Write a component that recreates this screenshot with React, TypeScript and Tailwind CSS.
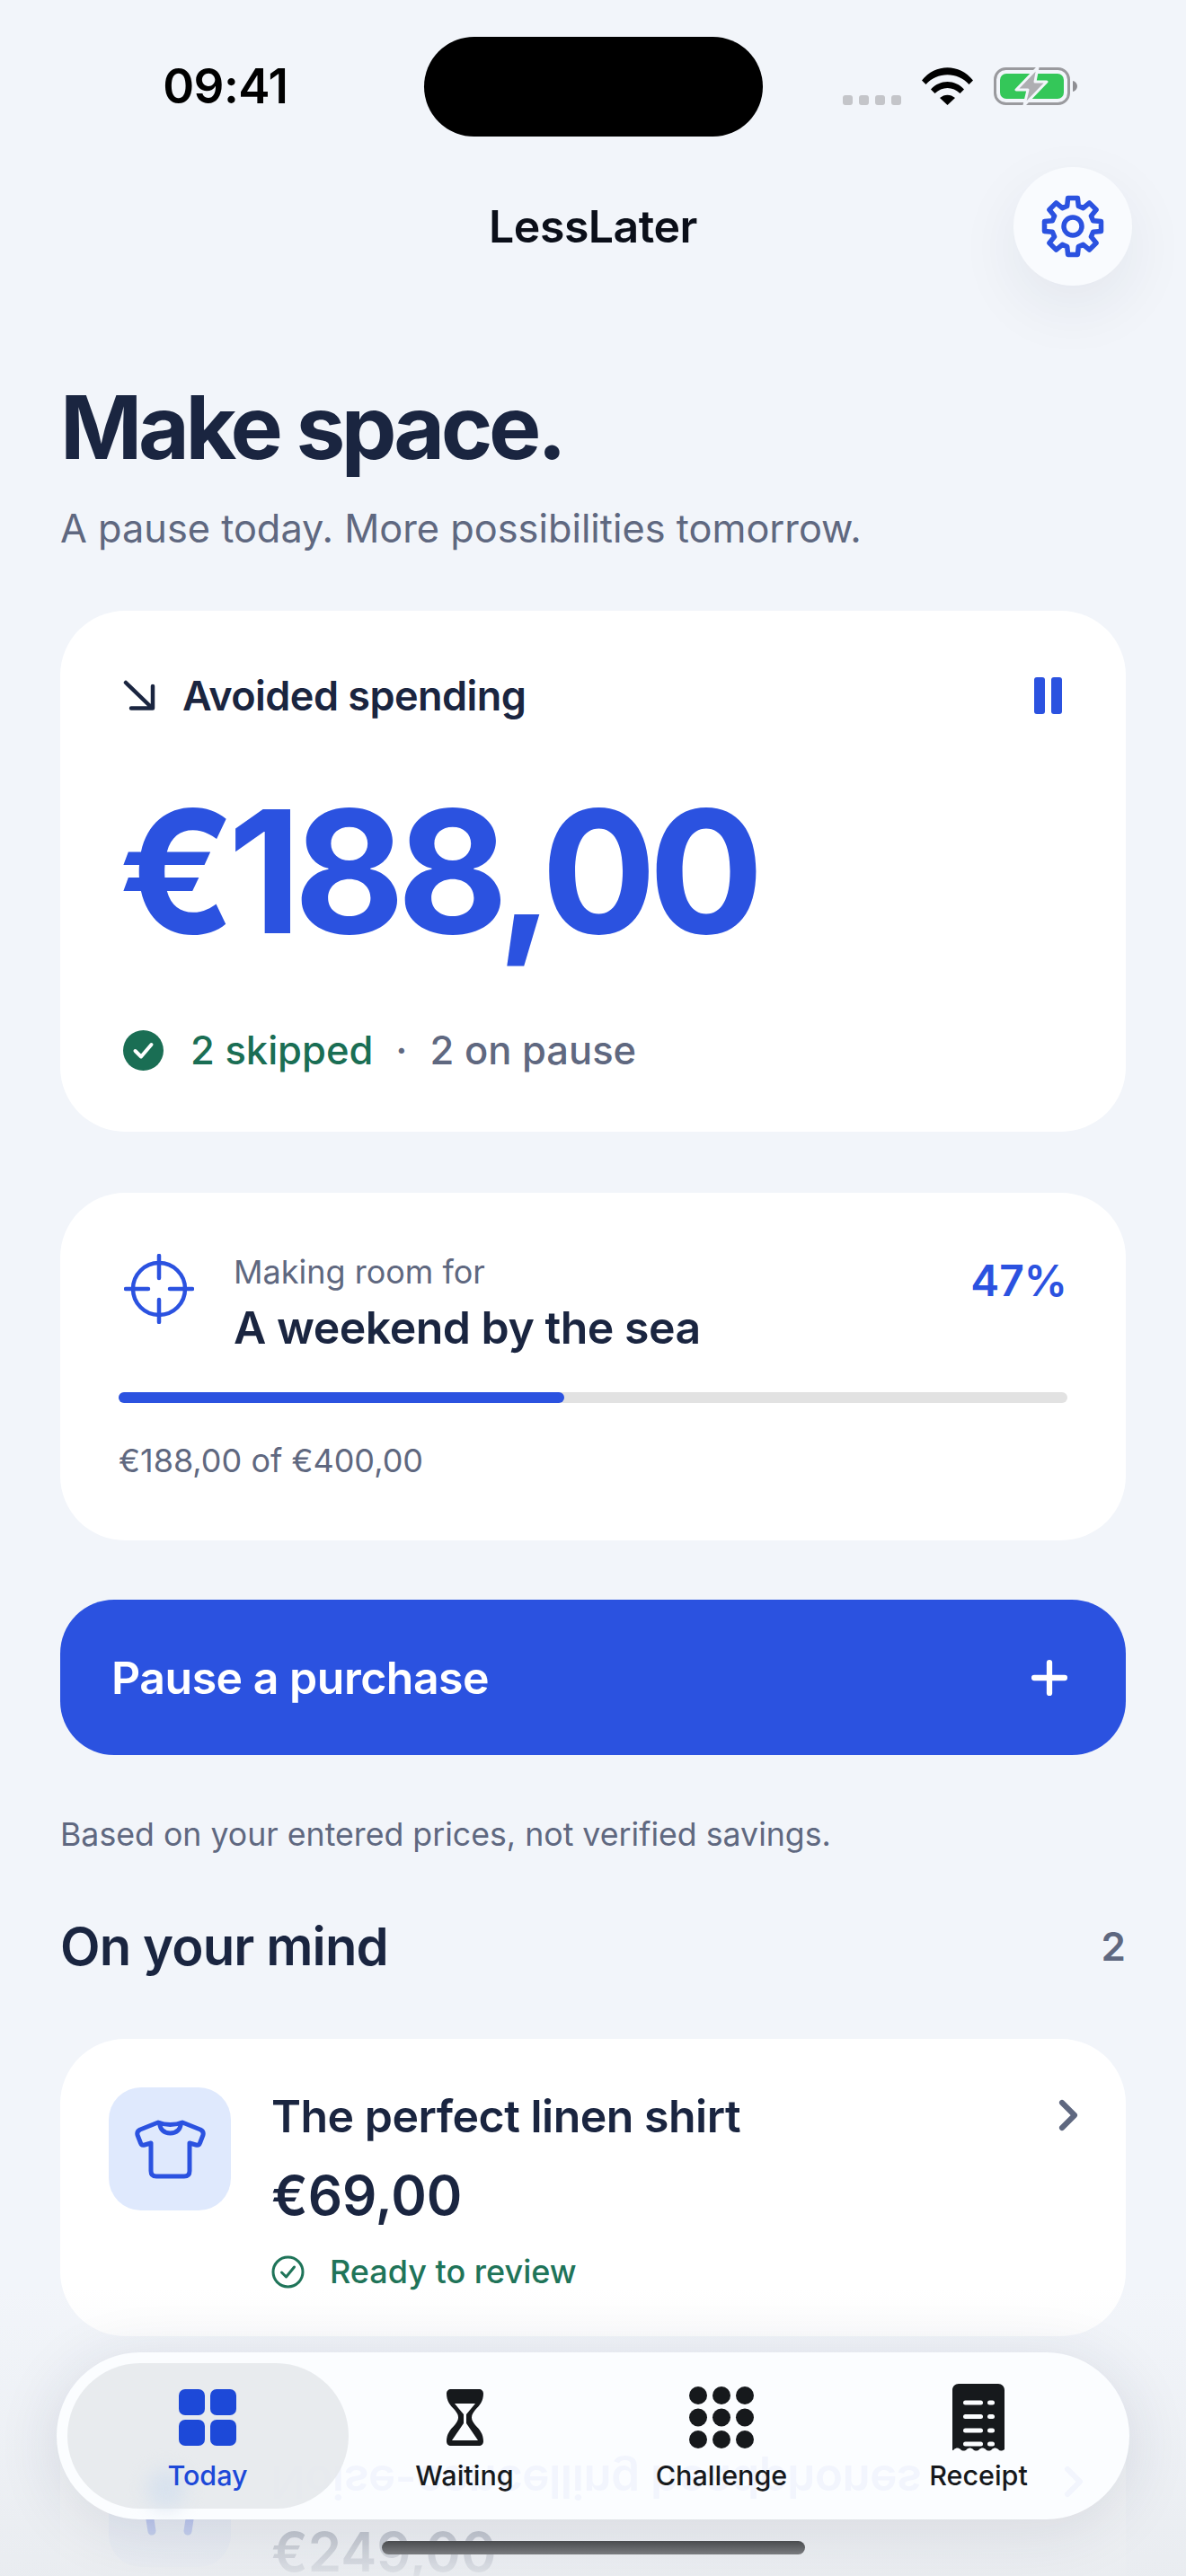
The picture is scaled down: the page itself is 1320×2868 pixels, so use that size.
import { ChevronRight, Plus } from "lucide-react";

const FONT = "font-['Inter','Noto_Sans',sans-serif]";

/* ── Small drawings ─────────────────────────────────────────────────── */
function Wifi() {
  return (
    <svg width="57" height="42" viewBox="0 0 57 42">
      <path d="M0 14.5C15 -4.5 42 -4.5 57 14.5L52.5 19C40 4.5 17 4.5 4.5 19Z" fill="#000" />
      <path d="M10 24.5C20 13 37 13 47 24.5L42.5 29C34.5 21 22.5 21 14.5 29Z" fill="#000" />
      <path d="M20 34C25 29.5 32 29.5 37 34L28.5 42Z" fill="#000" />
    </svg>
  );
}

function Battery() {
  return (
    <svg width="93" height="42" viewBox="0 0 93 42">
      <rect x="1.5" y="1.5" width="82" height="39" rx="12" fill="none" stroke="#9a9a9e" strokeWidth="3" />
      <rect x="7" y="7" width="71" height="28" rx="7" fill="#34c759" />
      <path d="M88 15c3 .8 5 3 5 6s-2 5.200-5 6z" fill="#8e8e93" />
      <path d="M49 0 25 25h13l-4 17 25-26H46z" fill="#aeaeb2" stroke="#f2f5fa" strokeWidth="3" strokeLinejoin="round" />
    </svg>
  );
}

// eight square teeth round a hub, corners softened by the round join
function Gear() {
  const pts: string[] = [];
  for (let i = 0; i < 8; i++) {
    const mid = (i * Math.PI) / 4 - Math.PI / 2;
    const rows: [number, number][] = [
      [23.5, -0.27],
      [32, -0.17],
      [32, 0.17],
      [23.5, 0.27],
    ];
    rows.forEach(([r, a]) => {
      pts.push(`${(35 + r * Math.cos(mid + a)).toFixed(1)},${(35 + r * Math.sin(mid + a)).toFixed(1)}`);
    });
  }
  return (
    <svg width="70" height="70" viewBox="0 0 70 70" fill="none" stroke="#2b52e0" strokeWidth="5.500" strokeLinejoin="round">
      <polygon points={pts.join(" ")} />
      <circle cx="35" cy="35" r="10" />
    </svg>
  );
}

function ArrowIn() {
  return (
    <svg width="36" height="34" viewBox="0 0 36 34" fill="none" stroke="#1a2540" strokeWidth="4.500" strokeLinecap="round" strokeLinejoin="round">
      <path d="M3 3l29 28M33 7v24.500H9" />
    </svg>
  );
}

function PauseBars() {
  return (
    <svg width="31" height="41" viewBox="0 0 31 41">
      <rect width="12" height="41" rx="3" fill="#2b52e0" />
      <rect x="19" width="12" height="41" rx="3" fill="#2b52e0" />
    </svg>
  );
}

function CheckBadge() {
  return (
    <svg width="45" height="45" viewBox="0 0 45 45">
      <circle cx="22.5" cy="22.500" r="22.500" fill="#1a6e54" />
      <path d="M13.500 23l6.500 6.500 11.500-13.500" fill="none" stroke="#fff" strokeWidth="4" strokeLinecap="round" strokeLinejoin="round" />
    </svg>
  );
}

function CheckRing() {
  return (
    <svg width="37" height="37" viewBox="0 0 37 37">
      <circle cx="18.500" cy="18.500" r="16.500" fill="none" stroke="#1f7459" strokeWidth="3" />
      <path d="M11.500 19l5 5 9-11" fill="none" stroke="#1f7459" strokeWidth="3" strokeLinecap="round" strokeLinejoin="round" />
    </svg>
  );
}

function Target() {
  return (
    <svg width="78" height="78" viewBox="0 0 78 78" fill="none" stroke="#2b52e0" strokeLinecap="round">
      <circle cx="39" cy="39" r="29" strokeWidth="4.500" />
      <path d="M39 2v25M39 51v25M2 39h25M51 39h25" strokeWidth="4.500" />
    </svg>
  );
}

function Tee() {
  return (
    <svg width="79" height="66" viewBox="0 0 79 66" fill="none" stroke="#2b52e0" strokeWidth="5" strokeLinejoin="round" strokeLinecap="round">
      <path d="M26 3 6 11Q2 13 3 17L6.500 26Q7.500 29 11 28L18 26V57Q18 63 24 63H55Q61 63 61 57V26L68 28Q71.500 29 72.500 26L76 17Q77 13 73 11L53 3Q47 5.500 39.500 5.500Q32 5.500 26 3Z" />
      <path d="M27.500 4Q29 15 39.500 15Q50 15 51.500 4" />
    </svg>
  );
}

function Buds() {
  return (
    <svg width="78" height="66" viewBox="0 0 78 66" fill="none" stroke="#2b52e0" strokeWidth="9" strokeLinecap="round">
      <path d="M5 30c0-34 68-34 68 0" strokeWidth="5" />
      <path d="M13 22l6 39M65 22l-6 39" />
    </svg>
  );
}

function TodayIcon() {
  return (
    <svg width="64" height="63" viewBox="0 0 64 63" fill="#1d49d8">
      <rect width="29" height="29" rx="7" />
      <rect x="35" width="29" height="29" rx="7" />
      <rect y="34" width="29" height="29" rx="7" />
      <rect x="35" y="34" width="29" height="29" rx="7" />
    </svg>
  );
}

function HourglassIcon() {
  return (
    <svg width="41" height="63" viewBox="0 0 41 63">
      <path
        fillRule="evenodd"
        fill="#16191c"
        d="M5 0h31c3 0 5 2 5 5 0 8-4 13-9 18-2 3-4 5-4 8.500s2 5.500 4 8.500c5 5 9 10 9 18 0 3-2 5-5 5H5c-3 0-5-2-5-5 0-8 4-13 9-18 2-3 4-5 4-8.500S11 26 9 23C4 18 0 13 0 5c0-3 2-5 5-5zM9 16H32L22 28V38L35 57H6L19 38V28Z"
      />
    </svg>
  );
}

function DotsIcon() {
  const cells = [10, 36, 62];
  return (
    <svg width="72" height="69" viewBox="0 0 72 69" fill="#16191c">
      {cells.map((x) =>
        [10, 34.500, 59].map((y) => <circle key={`${x}-${y}`} cx={x} cy={y} r="10" />)
      )}
    </svg>
  );
}

function ReceiptIcon() {
  const rows = [22, 37.500, 53, 68].map((y) => y - 1);
  return (
    <svg width="58" height="75" viewBox="0 0 58 75">
      <path
        fill="#16191c"
        d="M7 0h44c4 0 7 3 7 7v66c-3 2-5 2-7 0-2-2-5-2-7 0-2 2-5 2-7 0-2-2-5-2-7 0-2 2-5 2-7 0-2-2-5-2-7 0-2 2-5 2-7 0-2-2-5-2-7 0-1 1-2 2-2 0V7c0-4 3-7 7-7z"
      />
      {rows.map((y) => (
        <g key={y} fill="#fbfdff">
          <rect x="12" y={y - 2.500} width="22" height="5" rx="2.500" />
          <rect x="39" y={y - 2.500} width="8" height="5" rx="2.500" />
        </g>
      ))}
    </svg>
  );
}

/* ── Screen parts ───────────────────────────────────────────────────── */
function StatusBar() {
  return (
    <div className="grid grid-cols-[1fr_377px_1fr] pt-[41px]">
      <div className="flex h-[111px] items-center justify-center pl-[30px]">
        <span className="text-[53px] leading-none font-semibold tracking-[-0.01em] text-black">09:41</span>
      </div>
      <div className="h-[111px] rounded-full bg-black" />
      <div className="flex h-[76px] items-end pl-[89px]">
        <div className="mr-[23px] flex gap-[7px]">
          <span className="h-[11px] w-[11px] rounded-[3px] bg-[#c4c5c9]" />
          <span className="h-[11px] w-[11px] rounded-[3px] bg-[#c4c5c9]" />
          <span className="h-[11px] w-[11px] rounded-[3px] bg-[#c4c5c9]" />
          <span className="h-[11px] w-[11px] rounded-[3px] bg-[#c4c5c9]" />
        </div>
        <Wifi />
        <div className="ml-[23px]">
          <Battery />
        </div>
      </div>
    </div>
  );
}

function Header() {
  return (
    <div className="mt-[34px] grid grid-cols-[132px_1fr_132px] items-center pr-[60px] pl-[60px]">
      <div />
      <h1 className="text-center text-[50px] leading-none font-semibold tracking-[-0.01em] text-[#0b0f19]">LessLater</h1>
      <button className="flex h-[132px] w-[132px] items-center justify-center rounded-full bg-[#f9fbfe] shadow-[0_24px_70px_rgba(30,40,70,0.07)]">
        <Gear />
      </button>
    </div>
  );
}

function SavingsCard() {
  return (
    <section className="mt-[64px] flex h-[580px] flex-col rounded-[72px] bg-white px-[70px]">
      <div className="mt-[70px] flex h-[48px] items-center justify-between pr-[1px]">
        <div className="flex items-center gap-[30px]">
          <ArrowIn />
          <span className="text-[45px] leading-none font-semibold tracking-[-0.012em] text-[#1a2540]">Avoided spending</span>
        </div>
        <PauseBars />
      </div>
      <div className="mt-[79px] -ml-[5px] text-[190px] leading-[186px] font-[650] tracking-[-0.045em] text-[#2b52e0]">€188,00</div>
      <div className="mt-[84px] flex items-center text-[43.500px] leading-none">
        <CheckBadge />
        <span className="ml-[30px] font-medium text-[#1a6e54]">2 skipped</span>
        <span className="mx-[25px] font-medium text-[#5f6880]">·</span>
        <span className="font-medium text-[#5f6880]">2 on pause</span>
      </div>
    </section>
  );
}

function GoalCard() {
  return (
    <section className="mt-[68px] h-[387px] rounded-[72px] bg-white px-[65px] pt-[68px]">
      <div className="flex items-start">
        <div className="ml-[6px]">
          <Target />
        </div>
        <div className="ml-[44px] flex-1">
          <div className="text-[36px] leading-[40px] text-[#5f6880]">Making room for</div>
          <div className="mt-[16px] text-[50px] leading-[52px] font-semibold tracking-[-0.01em] text-[#1a2540]">A weekend by the sea</div>
        </div>
        <div className="pt-[4px] text-[48px] leading-[52px] font-semibold text-[#2b52e0]">47%</div>
      </div>
      <div className="mt-[46px] h-[12px] rounded-full bg-[#e2e2e2]">
        <div className="h-full rounded-full bg-[#2b52e0]" style={{ width: "47%" }} />
      </div>
      <div className="mt-[44px] text-[36px] leading-[40px] text-[#5f6880]">€188,00 of €400,00</div>
    </section>
  );
}

function PauseButton() {
  return (
    <button className="mt-[66px] flex h-[173px] w-full items-center justify-between rounded-[60px] bg-[#2b52e0] pr-[56px] pl-[57px] text-white">
      <span className="text-[50px] leading-none font-semibold tracking-[-0.01em]">Pause a purchase</span>
      <Plus size={58} strokeWidth={2.6} color="#fff" />
    </button>
  );
}

function ItemCard({
  name,
  price,
  icon,
  status,
}: {
  name: string;
  price: string;
  icon: React.ReactNode;
  status?: string;
}) {
  return (
    <article className="flex h-[331px] rounded-[72px] bg-white pt-[54px] pr-[36px] pl-[54px]">
      <div className="flex h-[137px] w-[136px] shrink-0 items-center justify-center rounded-[36px] bg-[#dfe9fd]">{icon}</div>
      <div className="ml-[45px] flex-1">
        <div className="mt-[2px] text-[50px] leading-[60px] font-semibold tracking-[-0.01em] text-[#1a2540]">{name}</div>
        <div className="mt-[28px] text-[60px] leading-[60px] font-semibold text-[#1a2540]">{price}</div>
        {status && (
          <div className="mt-[31px] flex items-center">
            <CheckRing />
            <span className="ml-[28px] text-[36px] leading-[48px] font-medium text-[#1f7459]">{status}</span>
          </div>
        )}
      </div>
      <ChevronRight size={56} strokeWidth={2.6} color="#5f6880" className="mt-[3px]" />
    </article>
  );
}

function TabItem({ icon, label, active }: { icon: React.ReactNode; label: string; active?: boolean }) {
  return (
    <div className="relative flex flex-col items-center">
      <div className="flex h-[75px] items-center justify-center">{icon}</div>
      <span className={`mt-[8px] text-[30.500px] leading-[38px] font-medium ${active ? "text-[#1d49d8]" : "text-[#16191c]"}`}>{label}</span>
    </div>
  );
}

function TabBar() {
  return (
    <nav className="absolute top-[2619px] left-[63px] h-[186px] w-[1194px] overflow-hidden rounded-[93px] bg-[#fbfdff] shadow-[0_10px_70px_rgba(30,40,70,0.12)]">
      {/* the card underneath, bent upside down by the glass */}
      <div aria-hidden className="absolute top-[114px] left-[238px] -scale-y-100 text-[51px] leading-[60px] font-semibold tracking-[-0.01em] whitespace-nowrap text-[#f2f5fd] blur-[0.5px]">
        Noise-cancelling headphones
      </div>
      <div aria-hidden className="absolute top-[116px] left-[1104px] -scale-y-100">
        <ChevronRight size={56} strokeWidth={2.6} color="#f2f5fd" />
      </div>
      <div className="absolute top-[12px] left-[12px] h-[162px] w-[313px] rounded-[81px] bg-[#e6e9ec]/90" />
      <div className="absolute top-[130px] left-[100px] h-[44px] w-[44px] rounded-full bg-[#d8e2ee] blur-[10px]" />
      <div className="relative grid grid-cols-4 px-[25px] pt-[35px]">
        <TabItem icon={<TodayIcon />} label="Today" active />
        <TabItem icon={<HourglassIcon />} label="Waiting" />
        <TabItem icon={<DotsIcon />} label="Challenge" />
        <TabItem icon={<ReceiptIcon />} label="Receipt" />
      </div>
    </nav>
  );
}

/* ── Page ───────────────────────────────────────────────────────────── */
export default function App() {
  return (
    <div className={`relative h-[2868px] w-[1320px] overflow-hidden bg-[#f2f5fa] ${FONT}`}>
      <StatusBar />
      <Header />

      <main className="px-[67px]">
        <h2 className="mt-[98px] text-[98px] leading-[120px] font-bold tracking-[-0.045em] text-[#1a2540]">Make space.</h2>
        <p className="mt-[24px] text-[43.300px] leading-[56px] text-[#5f6880]">A pause today. More possibilities tomorrow.</p>

        <SavingsCard />
        <GoalCard />
        <PauseButton />

        <p className="mt-[68px] text-[35.700px] leading-[40px] text-[#5f6880]">Based on your entered prices, not verified savings.</p>

        <div className="mt-[69px] flex items-center justify-between">
          <h3 className="text-[58px] leading-[72px] font-semibold tracking-[-0.015em] text-[#1a2540]">On your mind</h3>
          <span className="text-[44px] font-semibold text-[#5f6880]">2</span>
        </div>

        <div className="mt-[67px] flex flex-col gap-[66px]">
          <ItemCard name="The perfect linen shirt" price="€69,00" icon={<Tee />} status="Ready to review" />
          <ItemCard name="Noise-cancelling headphones" price="€249,00" icon={<Buds />} />
        </div>
      </main>

      {/* content fades out under the tab bar */}
      <div className="absolute inset-x-0 bottom-0 h-[320px] bg-gradient-to-b from-[#e9ecf0]/0 to-[#e9ecf0]/95" />
      <TabBar />
      <div className="absolute top-[2829px] left-[425px] h-[15px] w-[471px] rounded-full bg-gradient-to-b from-[#4a4c4f] to-[#7a7c80]" />
    </div>
  );
}
